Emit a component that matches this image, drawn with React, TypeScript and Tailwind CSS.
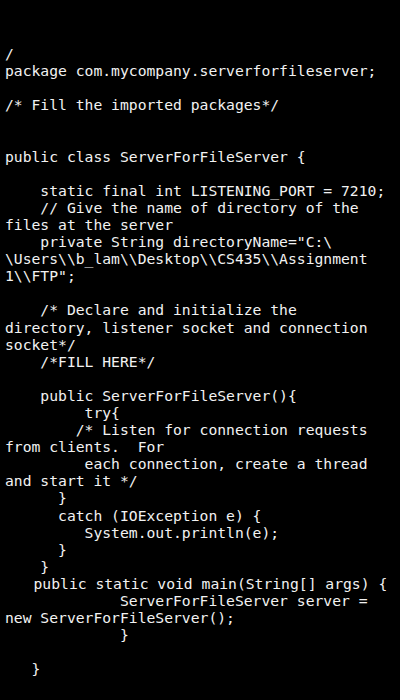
import React from 'react';

const lines: string[] = [
  '/',
  'package com.mycompany.serverforfileserver;',
  '',
  '/* Fill the imported packages*/',
  '',
  '',
  'public class ServerForFileServer {',
  '',
  '    static final int LISTENING_PORT = 7210;',
  '    // Give the name of directory of the',
  'files at the server',
  String.raw`    private String directoryName="C:\ `.trimEnd(),
  String.raw`\Users\\b_lam\\Desktop\\CS435\\Assignment`,
  String.raw`1\\FTP";`,
  '',
  '    /* Declare and initialize the',
  'directory, listener socket and connection',
  'socket*/',
  '    /*FILL HERE*/',
  '',
  '    public ServerForFileServer(){',
  '         try{',
  '        /* Listen for connection requests',
  'from clients.  For',
  '         each connection, create a thread',
  'and start it */',
  '      }',
  '      catch (IOException e) {',
  '         System.out.println(e);',
  '      }',
  '    }',
  'MAIN',
  '             ServerForFileServer server =',
  'new ServerForFileServer();',
  '             }',
  '',
  '   }',
];

export default function App() {
  return (
    <div
      className="h-[700px] w-[400px] overflow-hidden bg-black pl-[5px] pt-[45px] text-[14.7px] leading-[17.1px] text-[#f2f2f2]"
      style={{ fontFamily: '"DejaVu Sans Mono", monospace' }}
    >
      {lines.map((line, i) =>
        line === 'MAIN' ? (
          // this line sits a little left of the 4-space indent in the original
          <div key={i} className="whitespace-pre pl-[2px]">
            {'   public static void main(String[] args) {'}
          </div>
        ) : (
          <div key={i} className="h-[17.1px] whitespace-pre">
            {line}
          </div>
        )
      )}
    </div>
  );
}
